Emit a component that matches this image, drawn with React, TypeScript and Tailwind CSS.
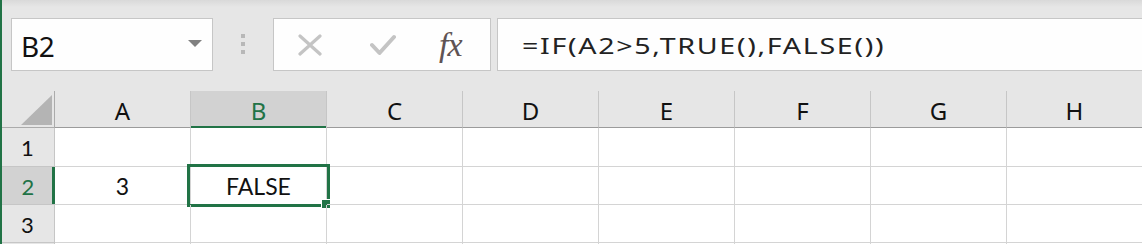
import React from "react";

const cols = ["A", "B", "C", "D", "E", "F", "G", "H"];

function HeaderRow() {
  return (
    <div className="flex h-[37px] bg-[#e6e6e6]">
      <div className="relative w-[53px] shrink-0 border-r border-b border-[#ababab]">
        <svg className="absolute left-[19px] top-[4px]" width="31" height="30" viewBox="0 0 31 30">
          <polygon points="31,0 31,30 0,30" fill="#b4b4b4" />
        </svg>
      </div>
      {cols.map((c) => (
        <div
          key={c}
          className={
            c === "B"
              ? "relative w-[136px] shrink-0 flex items-center justify-center bg-[#d2d2d2] border-r border-[#c6c6c6] text-[#217346]"
              : "relative w-[136px] shrink-0 flex items-center justify-center border-r border-b border-[#c6c6c6] border-b-[#9b9b9b] text-[#111]"
          }
          style={{ fontFamily: "'Noto Sans', sans-serif" }}
        >
          <span className="text-[24px] leading-none pt-[3px]">{c}</span>
          {c === "B" && <div className="absolute left-0 right-0 bottom-0 h-[2px] bg-[#217346]" />}
        </div>
      ))}
    </div>
  );
}

function Row({ n, h, a, b, sel }: { n?: number; h: string; a?: string; b?: string; sel?: boolean }) {
  return (
    <div className={`flex ${h} bg-white`}>
      <div
        className={
          sel
            ? "relative w-[53px] shrink-0 flex items-center justify-center bg-[#d2d2d2] border-b border-[#c6c6c6] text-[#217346]"
            : "relative w-[53px] shrink-0 flex items-center justify-center bg-[#e6e6e6] border-r border-b border-[#c6c6c6] text-[#111]"
        }
        style={{ fontFamily: "Lato, sans-serif" }}
      >
        <span className="text-[22px] leading-none pt-[2px] pr-[1px]">{n}</span>
        {sel && <div className="absolute right-0 top-0 bottom-0 w-[3px] bg-[#217346]" />}
      </div>
      {cols.map((c) => (
        <div
          key={c}
          className="relative w-[136px] shrink-0 flex items-center justify-center border-r border-b border-[#d4d4d4] text-[#111]"
          style={{ fontFamily: "Lato, sans-serif" }}
        >
          <span className="text-[23px] leading-none pt-[2px]">{c === "A" ? a : c === "B" ? b : ""}</span>
          {sel && c === "B" && (
            <>
              <div className="absolute left-[-4px] top-[-3px] w-[143px] h-[43px] border-[3px] border-[#217346]" />
              <div className="absolute left-[130px] top-[32px] w-[10px] h-[10px] bg-[#217346] border border-white" />
            </>
          )}
        </div>
      ))}
    </div>
  );
}

export default function App() {
  return (
    <div className="w-[1142px] h-[244px] overflow-hidden bg-[#e6e6e6] border-l-2 border-[#217346]">
      <div className="h-[91px] flex items-start pt-[18px] bg-[linear-gradient(#d9d9d9,#e6e6e6_7px)]">
        <div className="ml-[9px] w-[202px] h-[53px] shrink-0 border border-[#c6c6c6] bg-[#fefefe] flex items-center justify-between pl-[9px] pr-[10px]">
          <span
            className="text-[28px] leading-none pt-[3px] tracking-[-0.5px] text-[#111]"
            style={{ fontFamily: "'Noto Sans', sans-serif" }}
          >
            B2
          </span>
          <svg width="14" height="7" viewBox="0 0 14 7" className="mt-[-2px]">
            <polygon points="0,0 14,0 7,7" fill="#808080" />
          </svg>
        </div>
        <svg width="4" height="20" viewBox="0 0 4 20" className="ml-[28px] mt-[16px] shrink-0">
          <rect x="0" y="0" width="4" height="4" fill="#b8b8b8" />
          <rect x="0" y="8" width="4" height="4" fill="#b8b8b8" />
          <rect x="0" y="16" width="4" height="4" fill="#b8b8b8" />
        </svg>
        <div className="ml-[28px] w-[218px] h-[53px] shrink-0 border border-[#c6c6c6] bg-[#fefefe] flex items-center">
          <svg width="24" height="22" viewBox="0 0 24 22" className="ml-[24px]">
            <path d="M2 2 L22 20 M22 2 L2 20" stroke="#c4c4c4" strokeWidth="3.2" strokeLinecap="round" />
          </svg>
          <svg width="26" height="22" viewBox="0 0 26 22" className="ml-[48px]">
            <path d="M2 11 L9.5 19 L24 3" stroke="#c4c4c4" strokeWidth="4" fill="none" strokeLinejoin="round" strokeLinecap="round" />
          </svg>
          <span
            className="ml-[43px] text-[34px] leading-none italic text-[#5f5354] tracking-[-1px]"
            style={{ fontFamily: "'Liberation Serif', serif" }}
          >
            fx
          </span>
        </div>
        <div className="ml-[6px] w-[800px] h-[53px] shrink-0 border border-[#c6c6c6] border-r-0 bg-[#fefefe] flex items-center pl-[24px]">
          <span
            className="inline-block origin-left scale-x-[1.3] text-[22px] leading-none tracking-[1.3px] text-[#222] whitespace-nowrap"
            style={{ fontFamily: "'Noto Sans', sans-serif" }}
          >
            =IF(A2&gt;5,TRUE(),FALSE())
          </span>
        </div>
      </div>
      <HeaderRow />
      <Row n={1} h="h-[39px]" />
      <Row n={2} h="h-[38px]" a="3" b="FALSE" sel />
      <Row n={3} h="h-[38px]" />
      <Row h="h-[38px]" />
    </div>
  );
}
